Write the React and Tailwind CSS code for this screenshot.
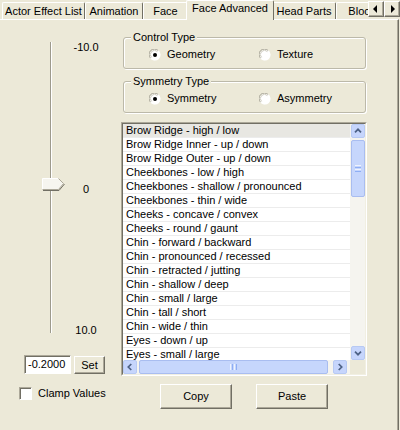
import React from 'react';

const items = [
    'Brow Ridge - high / low',
    'Brow Ridge Inner - up / down',
    'Brow Ridge Outer - up / down',
    'Cheekbones - low / high',
    'Cheekbones - shallow / pronounced',
    'Cheekbones - thin / wide',
    'Cheeks - concave / convex',
    'Cheeks - round / gaunt',
    'Chin - forward / backward',
    'Chin - pronounced / recessed',
    'Chin - retracted / jutting',
    'Chin - shallow / deep',
    'Chin - small / large',
    'Chin - tall / short',
    'Chin - wide / thin',
    'Eyes - down / up',
    'Eyes - small / large',
];

const tabs = [
    { label: 'Actor Effect List', w: 'w-[83px]' },
    { label: 'Animation', w: 'w-[58px]' },
    { label: 'Face', w: 'w-[45px]' },
    { label: 'Face Advanced', w: 'w-[88px]', active: true },
    { label: 'Head Parts', w: 'w-[64px]' },
    { label: 'Bloodline', w: 'w-[70px]' },
];

const Radio = ({ checked }) => (
    <svg width="12" height="12" viewBox="0 0 12 12" className="shrink-0">
        <circle cx="6" cy="6" r="5.5" fill="#fff" />
        <path d="M1.6 9.2 A5 5 0 0 1 9.2 1.6" fill="none" stroke="#a3a093" strokeWidth="1" />
        <path d="M9.2 1.6 A5 5 0 0 1 1.6 9.2" fill="none" stroke="#fff" strokeWidth="1" />
        <path d="M2.6 8.4 A4 4 0 0 1 8.4 2.6" fill="none" stroke="#cfccc0" strokeWidth="1" />
        {checked && <circle cx="6" cy="6" r="2" fill="#000" />}
    </svg>
);

const Chevron = ({ dir }) => {
    const d = {
        up: 'M3.5 8.5 L7 5 L10.5 8.5',
        down: 'M3.5 5.5 L7 9 L10.5 5.5',
        left: 'M8.5 3.5 L5 7 L8.5 10.5',
        right: 'M5.5 3.5 L9 7 L5.5 10.5',
    }[dir];
    return (
        <svg width="14" height="14" viewBox="0 0 14 14">
            <path d={d} fill="none" stroke="#4d6185" strokeWidth="2" />
        </svg>
    );
};

const ScrollBtn = ({ dir }) => (
    <div className="w-[14px] h-[14px] shrink-0 flex items-center justify-center rounded-[2px] border border-[#b7c9f3] bg-[#c6d5fc]">
        <Chevron dir={dir} />
    </div>
);

const Button3D = ({ children, className = '' }) => (
    <div className={`flex items-center justify-center border border-t-white border-l-white border-r-[#716f64] border-b-[#716f64] bg-[#ece9d8] shadow-[inset_-1px_-1px_0_#aca899] ${className}`}>
        {children}
    </div>
);

// group box: title sits on the top border
const Group = ({ title, a, b }) => (
    <div className="ml-[2px] w-[243px] h-[32px] border border-[#bcb9a9] rounded-[3px] shadow-[1px_1px_0_#fff,inset_1px_1px_0_#fff]">
        <div className="-mt-[7px] ml-[7px] w-max px-[2px] bg-[#ece9d8] leading-[13px]">{title}</div>
        <div className="mt-[4px] pl-[25px] flex items-center leading-[13px]">
            <div className="w-[110px] flex items-center gap-[6px]">
                <Radio checked={a.checked} />
                <span>{a.label}</span>
            </div>
            <div className="flex items-center gap-[6px]">
                <Radio checked={b.checked} />
                <span>{b.label}</span>
            </div>
        </div>
    </div>
);

const App = () => {
    return (
        <div className="w-[400px] h-[430px] overflow-hidden bg-[#ece9d8] text-[11px] text-black font-['Liberation_Sans',Arial,sans-serif] flex flex-col">
            {/* tab strip */}
            <div className="relative h-[19px] flex items-end pl-[2px] shrink-0">
                {tabs.map((t) =>
                    t.active ? (
                        <div key={t.label} className={`relative z-10 -mx-[2px] -mb-[1px] h-[20px] ${t.w} shrink-0 bg-[#ece9d8] border-t border-l border-white border-r border-r-[#716f64] rounded-t-[2px] flex justify-center pt-[1px] leading-[13px]`}>
                            {t.label}
                        </div>
                    ) : (
                        <div key={t.label} className={`h-[17px] ${t.w} shrink-0 bg-[#ece9d8] border-t border-l border-white border-r border-r-[#716f64] rounded-t-[2px] flex items-center justify-center leading-[13px] whitespace-nowrap overflow-hidden`}>
                            {t.label}
                        </div>
                    )
                )}
                <div className="absolute right-0 top-[1px] flex">
                    <Button3D className="w-[16px] h-[16px]">
                        <svg width="8" height="8" viewBox="0 0 8 8"><path d="M5 0 L1 4 L5 8 Z" fill="#000" /></svg>
                    </Button3D>
                    <Button3D className="w-[16px] h-[16px]">
                        <svg width="8" height="8" viewBox="0 0 8 8"><path d="M3 0 L7 4 L3 8 Z" fill="#000" /></svg>
                    </Button3D>
                </div>
            </div>

            {/* panel */}
            <div className="flex-1 w-[399px] border-t border-white border-r border-r-[#716f64] shadow-[inset_-1px_0_0_#aca899] flex">
                {/* left column */}
                <div className="w-[121px] shrink-0 flex flex-col">
                    <div className="mt-[21px] h-[296px] flex">
                        <div className="relative w-[52px] shrink-0">
                            <div className="absolute left-[50px] top-[1px] h-[291px] w-[2px] border-l border-[#9d9a8c] border-r border-r-white" />
                            <svg className="absolute left-[42px] top-[137px]" width="23" height="13" viewBox="0 0 23 13">
                                <path d="M0.5 0.5 H16.5 L21.5 5.5 L16.5 11.5 H0.5 Z" fill="#f6f5ef" />
                                <path d="M0.5 11.5 V0.5 H16.5" fill="none" stroke="#fff" />
                                <path d="M0.5 11.5 H16.5 L21.5 5.5 L16.5 0.5" fill="none" stroke="#aca899" />
                                <path d="M1 12.5 H17 L22.5 6" fill="none" stroke="#716f64" />
                            </svg>
                        </div>
                        <div className="ml-[22px] w-[24px] flex flex-col justify-between items-center leading-[13px]">
                            <span>-10.0</span>
                            <span>0</span>
                            <span>10.0</span>
                        </div>
                    </div>

                    <div className="mt-[18px] pl-[24px] flex items-start gap-[3px]">
                        <div className="w-[47px] h-[19px] bg-white border border-t-[#aca899] border-l-[#aca899] border-r-white border-b-white shadow-[inset_1px_1px_0_#716f64] pl-[3px] flex items-center leading-[13px]">
                            -0.2000
                        </div>
                        <Button3D className="mt-[1px] w-[31px] h-[18px] leading-[13px]">Set</Button3D>
                    </div>

                    <div className="mt-[13px] pl-[19px] flex items-center gap-[6px]">
                        <div className="w-[13px] h-[13px] bg-white border border-t-[#aca899] border-l-[#aca899] border-r-white border-b-white shadow-[inset_1px_1px_0_#716f64]" />
                        <span className="leading-[13px]">Clamp Values</span>
                    </div>
                </div>

                {/* right column */}
                <div className="w-[246px] shrink-0 flex flex-col">
                    <div className="mt-[17px]">
                        <Group title="Control Type" a={{ label: 'Geometry', checked: true }} b={{ label: 'Texture' }} />
                    </div>
                    <div className="mt-[12px]">
                        <Group title="Symmetry Type" a={{ label: 'Symmetry', checked: true }} b={{ label: 'Asymmetry' }} />
                    </div>

                    {/* list box */}
                    <div className="mt-[9px] w-[246px] h-[254px] border border-t-[#aca899] border-l-[#aca899] border-r-white border-b-white">
                        <div className="w-full h-full border border-t-[#716f64] border-l-[#716f64] border-r-[#f1efe2] border-b-[#f1efe2] flex flex-col bg-white">
                            <div className="flex h-[236px]">
                                <div className="flex-1 overflow-hidden">
                                    {items.map((it, i) => (
                                        <div key={it} className={`h-[14px] border-b border-[#ececec] pl-[3px] leading-[13px] whitespace-nowrap ${i === 0 ? 'bg-[#e8e7e2]' : ''}`}>
                                            {it}
                                        </div>
                                    ))}
                                </div>
                                <div className="w-[15px] shrink-0 bg-[#f5f4ef] flex flex-col items-center">
                                    <ScrollBtn dir="up" />
                                    <div className="mt-[2px] w-[14px] h-[57px] rounded-[2px] border border-[#a9bdf0] bg-[#c6d6fc] flex flex-col items-center justify-center gap-[1px]">
                                        <div className="w-[6px] h-[1px] bg-[#eef3fe]" />
                                        <div className="w-[6px] h-[1px] bg-[#8eaef4]" />
                                        <div className="w-[6px] h-[1px] bg-[#eef3fe]" />
                                        <div className="w-[6px] h-[1px] bg-[#8eaef4]" />
                                    </div>
                                    <div className="flex-1" />
                                    <ScrollBtn dir="down" />
                                </div>
                            </div>
                            <div className="flex h-[14px]">
                                <div className="flex-1 bg-[#f5f4ef] flex items-center">
                                    <ScrollBtn dir="left" />
                                    <div className="ml-[2px] w-[189px] h-[14px] rounded-[2px] border border-[#a9bdf0] bg-[#c6d6fc] flex items-center justify-center gap-[1px]">
                                        <div className="w-[1px] h-[6px] bg-[#eef3fe]" />
                                        <div className="w-[1px] h-[6px] bg-[#8eaef4]" />
                                        <div className="w-[1px] h-[6px] bg-[#eef3fe]" />
                                        <div className="w-[1px] h-[6px] bg-[#8eaef4]" />
                                    </div>
                                    <div className="flex-1" />
                                    <ScrollBtn dir="right" />
                                    <div className="w-[3px]" />
                                </div>
                                <div className="w-[15px] bg-[#ece9d8]" />
                            </div>
                        </div>
                    </div>

                    <div className="mt-[8px] flex justify-center gap-[24px]">
                        <Button3D className="w-[72px] h-[25px] leading-[13px]">Copy</Button3D>
                        <Button3D className="w-[72px] h-[25px] leading-[13px]">Paste</Button3D>
                    </div>
                </div>
            </div>
        </div>
    );
};

export default App;
